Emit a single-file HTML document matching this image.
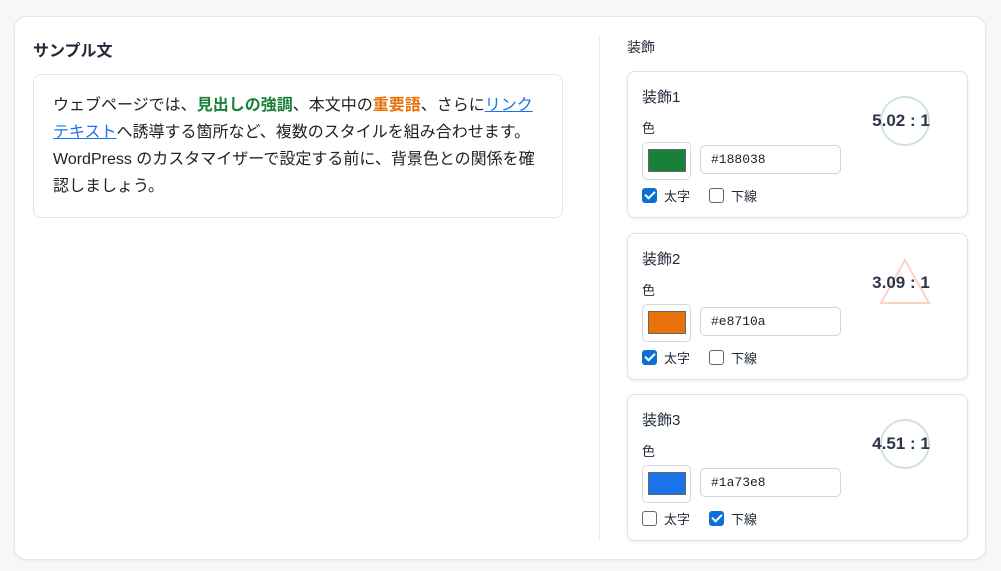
<!DOCTYPE html>
<html><head><meta charset="utf-8"><style>
*{box-sizing:border-box;margin:0;padding:0}
body{width:1001px;height:571px;background:#f6f7f9;font-family:"Liberation Sans","Noto Sans CJK JP",sans-serif;color:#1f2937;position:relative;overflow:hidden}
.outer{position:absolute;left:14px;top:16px;width:972px;height:544px;background:#fff;border:1px solid #e2e6ec;border-radius:12px;box-shadow:0 1px 2px rgba(0,0,0,.05)}
.h{position:absolute;font-size:16px;font-weight:bold;color:#1f2937}
.sample{position:absolute;left:33px;top:74px;width:530px;height:144px;border:1px solid #e2e6ec;border-radius:8px;padding:17px 0 0 19px;font-size:16px;line-height:27px;color:#222;white-space:nowrap}
.g{color:#188038;font-weight:bold}.o{color:#e8710a;font-weight:bold}.l{color:#1a73e8;text-decoration:underline}
.div{position:absolute;left:599px;top:35px;width:1px;height:506px;background:#e6e9ee}
.card{position:absolute;left:627px;width:341px;height:147px;border:1px solid #dfe3e9;border-radius:8px;box-shadow:0 1px 3px rgba(0,0,0,.08);background:#fff}
.t{position:absolute;left:14px;top:14px;font-size:15px}
.c{position:absolute;left:14px;top:46px;font-size:13px}
.sw{position:absolute;left:14px;top:70px;width:49px;height:38px;border:1px solid #d4d9e0;border-radius:5px}
.sw i{position:absolute;left:5px;top:6px;width:38px;height:23px;border:1px solid #666}
.in{position:absolute;left:72px;top:73px;width:141px;height:29px;border:1px solid #cfd5dd;border-radius:5px;font-family:"Liberation Mono",monospace;font-size:13px;padding:6px 10px;color:#222}
.cb{position:absolute;top:114px;font-size:13px;display:flex;align-items:center;gap:7px}
.bx{width:15px;height:15px;border:1.5px solid #666;border-radius:3px;display:inline-block}
.bx.on{background:#0b6fd6;border-color:#0b6fd6;position:relative}
.bx.on:after{content:"";position:absolute;left:4px;top:0px;width:4px;height:8px;border:solid #fff;border-width:0 2px 2px 0;transform:rotate(45deg)}
.r{position:absolute;left:230px;top:22px;width:90px;text-align:center;font-weight:bold;font-size:17px;color:#2d3748;line-height:54px}
.r svg{position:absolute;left:20px;top:0}
.r span{position:relative;left:-2px}
</style></head><body>
<div class="outer"></div>
<div class="h" style="left:33px;top:37px">サンプル文</div>
<div class="sample">ウェブページでは、<span class="g">見出しの強調</span>、本文中の<span class="o">重要語</span>、さらに<span class="l">リンク<br>テキスト</span>へ誘導する箇所など、複数のスタイルを組み合わせます。<br>WordPress のカスタマイザーで設定する前に、背景色との関係を確<br>認しましょう。</div>
<div class="div"></div>
<div style="position:absolute;left:627px;top:37px;font-size:14px">装飾</div>

<div class="card" style="top:71px">
<div class="t">装飾1</div><div class="c">色</div>
<div class="sw"><i style="background:#188038"></i></div>
<div class="in">#188038</div>
<div class="cb" style="left:14px"><span class="bx on"></span>太字</div>
<div class="cb" style="left:81px"><span class="bx"></span>下線</div>
<div class="r"><svg width="54" height="54"><circle cx="27" cy="27" r="24" fill="none" stroke="#cfe3da" stroke-width="2"/></svg><span>5.02 : 1</span></div>
</div>

<div class="card" style="top:233px">
<div class="t">装飾2</div><div class="c">色</div>
<div class="sw"><i style="background:#e8710a"></i></div>
<div class="in">#e8710a</div>
<div class="cb" style="left:14px"><span class="bx on"></span>太字</div>
<div class="cb" style="left:81px"><span class="bx"></span>下線</div>
<div class="r"><svg width="54" height="54" style="left:20px;top:1px"><polygon points="27,3 51,46 3,46" fill="none" stroke="#fbd3c2" stroke-width="2"/></svg><span>3.09 : 1</span></div>
</div>

<div class="card" style="top:394px">
<div class="t">装飾3</div><div class="c">色</div>
<div class="sw"><i style="background:#1a73e8"></i></div>
<div class="in">#1a73e8</div>
<div class="cb" style="left:14px"><span class="bx"></span>太字</div>
<div class="cb" style="left:81px"><span class="bx on"></span>下線</div>
<div class="r"><svg width="54" height="54"><circle cx="27" cy="27" r="24" fill="none" stroke="#cfe3da" stroke-width="2"/></svg><span>4.51 : 1</span></div>
</div>
</body></html>
